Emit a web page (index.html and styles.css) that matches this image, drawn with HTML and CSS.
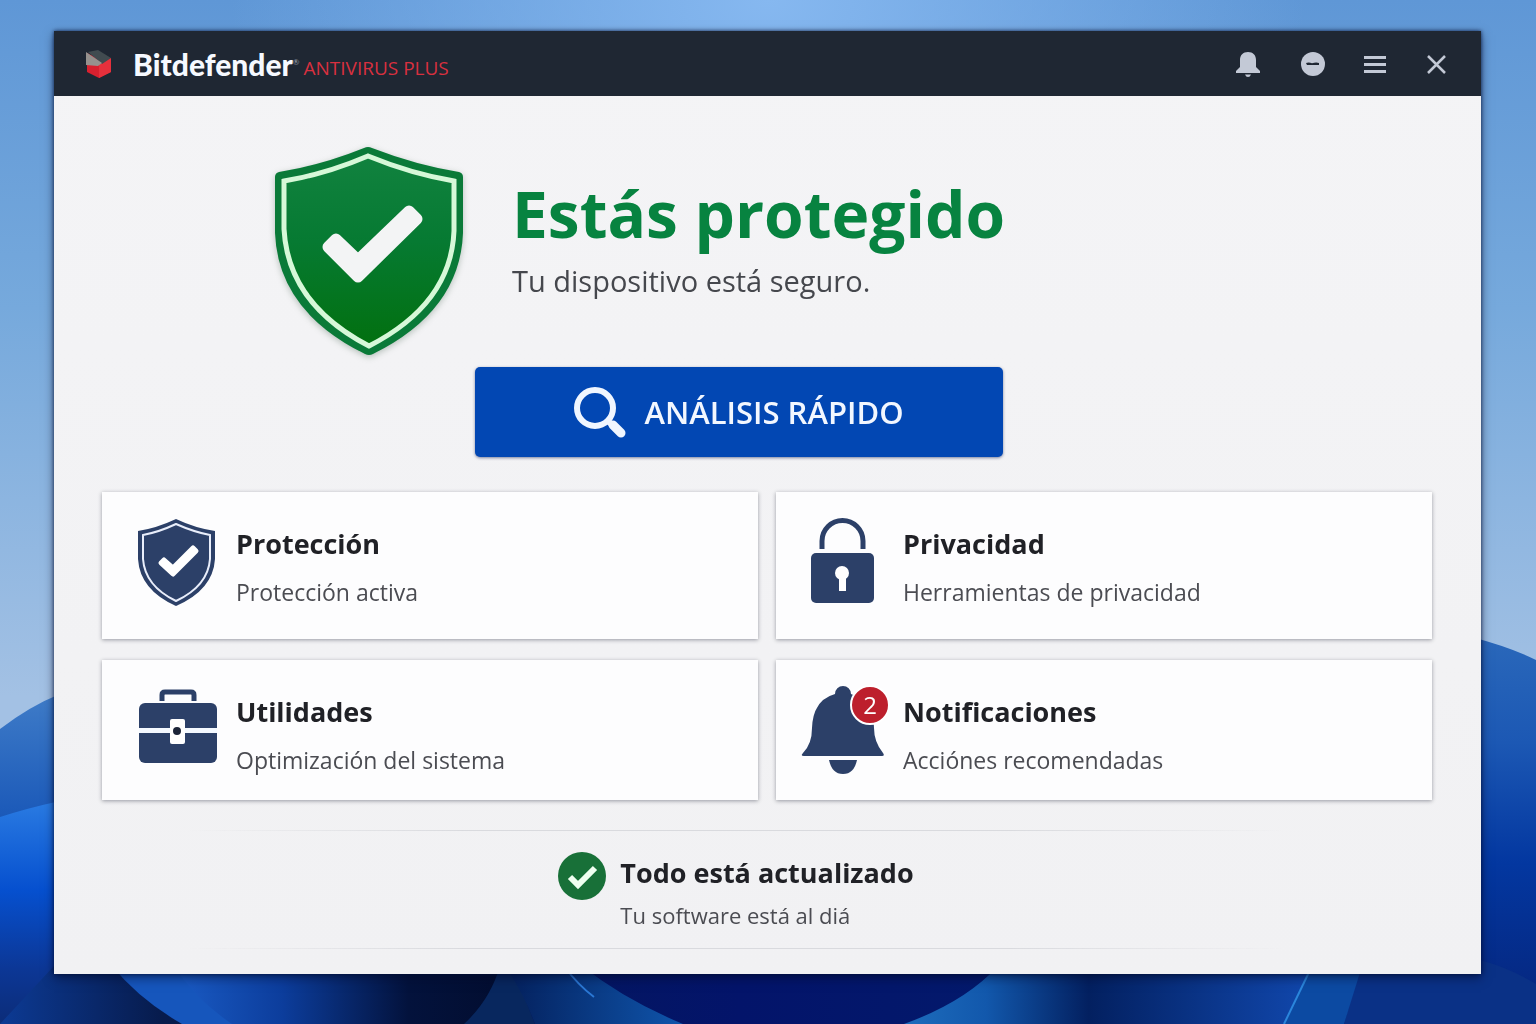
FILE: index.html
```html
<!DOCTYPE html>
<html lang="es">
<head>
<meta charset="utf-8">
<meta name="viewport" content="width=device-width, initial-scale=1">
<title>Bitdefender Antivirus Plus</title>
<link rel="stylesheet" href="styles.css">
</head>
<body>
<svg class="wallpaper" viewBox="0 0 1536 1024" preserveAspectRatio="none" aria-hidden="true">
  <defs>
    <linearGradient id="sky" x1="0" y1="0" x2="0" y2="1"><stop offset="0" stop-color="#5f97d6"/><stop offset=".3" stop-color="#76a9dc"/><stop offset=".68" stop-color="#a3c1e4"/></linearGradient>
    <radialGradient id="glow" cx=".5" cy="0" r=".35"><stop offset="0" stop-color="#86b8f0"/><stop offset="1" stop-color="#86b8f0" stop-opacity="0"/></radialGradient>
    <linearGradient id="hillBack" x1="0" y1="694" x2="0" y2="820" gradientUnits="userSpaceOnUse"><stop offset="0" stop-color="#3f7cc8"/><stop offset="1" stop-color="#1a58b8"/></linearGradient>
    <linearGradient id="hillFront" x1="0" y1="0" x2="0" y2="1"><stop offset="0" stop-color="#2a7be2"/><stop offset=".4" stop-color="#0650cf"/><stop offset=".75" stop-color="#0c3796"/><stop offset="1" stop-color="#0c2c78"/></linearGradient>
    <linearGradient id="hillRight" x1="0" y1="0" x2="0" y2="1"><stop offset="0" stop-color="#2c6abb"/><stop offset=".3" stop-color="#1c58b4"/><stop offset=".6" stop-color="#0337a0"/><stop offset="1" stop-color="#06247a"/></linearGradient>
    <linearGradient id="floor" x1="0" y1="0" x2="1" y2="0"><stop offset="0" stop-color="#0c3a94"/><stop offset=".11" stop-color="#071b4c"/><stop offset=".5" stop-color="#03146a"/><stop offset=".9" stop-color="#03206e"/><stop offset="1" stop-color="#0a3594"/></linearGradient>
    <linearGradient id="petalLeft" x1="0" y1="0" x2="1" y2="0"><stop offset="0" stop-color="#1a5bc4"/><stop offset=".3" stop-color="#0c3d9c"/><stop offset=".65" stop-color="#03123c"/><stop offset="1" stop-color="#020c2c"/></linearGradient>
    <linearGradient id="petalMid" x1="0" y1="0" x2="1" y2="0"><stop offset="0" stop-color="#04205c"/><stop offset="1" stop-color="#0f55ac"/></linearGradient>
    <linearGradient id="petalRight" x1="0" y1="0" x2="1" y2="0"><stop offset="0" stop-color="#1d6cbc"/><stop offset=".2" stop-color="#1258ac"/><stop offset=".45" stop-color="#032060"/><stop offset="1" stop-color="#1148ae"/></linearGradient>
  </defs>
  <rect width="1536" height="1024" fill="url(#sky)"/>
  <rect width="1536" height="1024" fill="url(#glow)"/>
  <path d="M0 729Q30 706 60 694H400V1024H0Z" fill="url(#hillBack)"/>
  <path d="M0 817Q28 808 60 801H400V1024H0Z" fill="url(#hillFront)"/>
  <path d="M1400 622Q1490 637 1536 660V1024H1400Z" fill="url(#hillRight)"/>
  <path d="M54 966H1480V1024H0Z" fill="url(#floor)"/>
  <path d="M1360 966H1480V960Q1510 968 1536 984V1024H1344Z" fill="#0a3186"/>
  <path d="M112 966Q140 1000 182 1024H236L176 966Z" fill="#1656bc"/>
  <path d="M174 966Q196 1000 232 1024H535L500 966Z" fill="url(#petalLeft)"/>
  <path d="M500 966Q490 1000 464 1024H535L512 966Z" fill="#08275e"/>
  <path d="M505 966Q525 996 535 1024H683Q625 1000 582 966Z" fill="url(#petalMid)"/>
  <path d="M564 966Q578 985 594 997" fill="none" stroke="#2b78d4" stroke-width="2"/>
  <path d="M998 966Q965 1002 904 1024H1285L1314 966Z" fill="url(#petalRight)"/>
  <path d="M1312 966L1284 1024H1344L1362 966Z" fill="#0c4aa2"/>
  <path d="M1312 966L1284 1024" stroke="#2b86dc" stroke-width="2"/>
</svg>

<main class="window">
  <header class="titlebar">
    <svg class="logo" viewBox="0 0 26 28" aria-hidden="true">
      <path d="M1 3L13 9 25 8V22L13 28 1 22Z" fill="#d8202f"/>
      <path d="M13 14L25 8V22L13 28Z" fill="#e5303c"/>
      <path d="M2 2L12 0 25 8 16 14Z" fill="#414b50"/>
      <path d="M0 2L16 13 12 16 0 15Z" fill="#96918e"/>
    </svg>
    <h1 class="brand">Bitdefender<sup class="reg">®</sup></h1>
    <span class="edition">ANTIVIRUS PLUS</span>
    <nav class="tools" aria-label="Ventana">
      <button class="tool" type="button" aria-label="Avisos"><svg viewBox="0 0 24 26"><path d="M0 22v-2l4-4V9c0-5 3-8 8-8s8 3 8 8v7l4 4v2Z"/><path d="M9 23.500h6q-1 2.500-3 2.500t-3-2.500Z"/></svg></button>
      <button class="tool" type="button" aria-label="Cuenta"><svg viewBox="0 0 24 26"><circle cx="12" cy="13" r="12"/><path class="cut" d="M5 12q3-1 6 .3 4-1.300 7-.3v2H6Z"/></svg></button>
      <button class="tool" type="button" aria-label="Menú"><svg viewBox="0 0 24 26"><path d="M1 5h22v3H1ZM1 12h22v3H1ZM1 19h22v3H1Z"/></svg></button>
      <button class="tool" type="button" aria-label="Cerrar"><svg viewBox="0 0 24 26"><path class="line" d="M3 5l17 17M20 5L3 22"/></svg></button>
    </nav>
  </header>

  <section class="hero">
    <svg class="hero-shield" viewBox="0 0 190 210" aria-hidden="true">
      <defs><linearGradient id="green" x1="0" y1="0" x2="0" y2="1"><stop offset="0" stop-color="#11823f"/><stop offset=".45" stop-color="#067a32"/><stop offset="1" stop-color="#02700f"/></linearGradient></defs>
      <path d="M90 1Q94 -1 98 1Q142 18 185 25Q189 26 189 30V86Q186 164 99 207Q95 209 91 207Q4 164 1 86V30Q1 26 5 25Q48 18 90 1Z" fill="#0a7a38"/>
      <path d="M94 9Q138 27 180 34V84Q177 157 95 199Q14 157 10 82V34Q52 27 94 9Z" fill="url(#green)" stroke="#d6f8d8" stroke-width="5"/>
      <path d="M54 100L62 92 84 113 135 64 143 72 84 130Z" fill="#f3f4f5" stroke="#f3f4f5" stroke-width="11" stroke-linejoin="round"/>
    </svg>
    <div class="hero-text">
      <h2 class="hero-title">Estás protegido</h2>
      <p class="hero-sub">Tu dispositivo está seguro.</p>
    </div>
  </section>

  <button class="scan" type="button">
    <svg class="scan-icon" viewBox="0 0 52 52" aria-hidden="true"><circle cx="21" cy="22" r="18" fill="none" stroke="#f0f6ff" stroke-width="6"/><path d="M34 35L38 39" stroke="#f0f6ff" stroke-width="6"/><path d="M39 39L47 47" stroke="#f0f6ff" stroke-width="9" stroke-linecap="round"/></svg>
    <span>ANÁLISIS RÁPIDO</span>
  </button>

  <section class="cards">
    <a class="card" href="#proteccion">
      <svg class="card-icon" viewBox="0 0 84 92" aria-hidden="true"><path d="M41 3Q60 12 80 15V43Q78 74 41 90Q5 74 3 43V15Q22 12 41 3Z" fill="#2c4068"/><path d="M41 8Q59 16 75 19V43Q73 70 41 85Q10 70 8 43V19Q24 16 41 8Z" fill="none" stroke="#e9eefb" stroke-width="2"/><path d="M26 47L29 44 38 52 58 32 61 35 38 58Z" fill="#fff" stroke="#fff" stroke-width="5" stroke-linejoin="round"/></svg>
      <span class="card-text"><strong class="card-title">Protección</strong><span class="card-sub">Protección activa</span></span>
    </a>
    <a class="card" href="#privacidad">
      <svg class="card-icon" viewBox="0 0 84 92" aria-hidden="true"><path d="M22 33V25a20 20 0 0 1 41 0V33" fill="none" stroke="#2c4068" stroke-width="5"/><rect x="11" y="37" width="63" height="50" rx="5" fill="#2c4068"/><circle cx="42" cy="57" r="7" fill="#fff"/><path d="M39 59h7v16h-7Z" fill="#fff"/></svg>
      <span class="card-text"><strong class="card-title">Privacidad</strong><span class="card-sub">Herramientas de privacidad</span></span>
    </a>
    <a class="card" href="#utilidades">
      <svg class="card-icon" viewBox="0 0 84 92" aria-hidden="true"><path d="M27 17V11q0-3 3-3h26q3 0 3 3V17" fill="none" stroke="#2c4068" stroke-width="5"/><rect x="4" y="19" width="78" height="60" rx="6" fill="#2c4068"/><path d="M4 44h78v5H4Z" fill="#f4f9ff"/><rect x="35" y="35" width="15" height="25" rx="2" fill="#fff"/><circle cx="42" cy="47" r="4" fill="#1c2438"/></svg>
      <span class="card-text"><strong class="card-title">Utilidades</strong><span class="card-sub">Optimización del sistema</span></span>
    </a>
    <a class="card" href="#notificaciones">
      <span class="icon-wrap">
        <svg class="card-icon" viewBox="0 0 84 92" aria-hidden="true"><path d="M35 10a8 8 0 0 1 16 0Q74 18 74 44Q74 58 83 69Q85 72 82 72H4Q0 72 3 69Q12 60 12 44Q13 16 35 10Z" fill="#2c4068"/><path d="M29 76H57Q54 90 43 90T29 76Z" fill="#2c4068"/></svg>
        <span class="badge">2</span>
      </span>
      <span class="card-text"><strong class="card-title">Notificaciones</strong><span class="card-sub">Acciónes recomendadas</span></span>
    </a>
  </section>

  <footer class="status">
    <svg class="status-icon" viewBox="0 0 48 48" aria-hidden="true"><circle cx="24" cy="24" r="24" fill="#187038"/><path d="M12 25L20 33 37 16" fill="none" stroke="#effff0" stroke-width="6"/></svg>
    <div>
      <p class="status-title">Todo está actualizado</p>
      <p class="status-sub">Tu software está al diá</p>
    </div>
  </footer>
</main>
</body>
</html>
```
FILE: styles.css
```css
* { box-sizing: border-box; }

body {
  margin: 0;
  padding: 31px 55px 50px 54px;
  min-height: 100vh;
  display: flex;
  background: #0c3a94;
  font-family: "Open Sans", "Noto Sans", sans-serif;
  color: #202126;
}

h1, h2, p { margin: 0; }

button { font: inherit; border: 0; padding: 0; cursor: pointer; }

.wallpaper {
  position: fixed;
  inset: 0;
  width: 100%;
  height: 100%;
  z-index: -1;
}

.window {
  flex: 1;
  display: flex;
  flex-direction: column;
  background: linear-gradient(#f4f4f6, #f1f1f3);
  box-shadow: 0 0 4px rgba(0, 12, 50, .8), 0 4px 10px rgba(0, 10, 40, .5);
}

.titlebar {
  display: flex;
  align-items: center;
  height: 65px;
  padding: 0 32px;
  background: #1f2733;
}

.logo { width: 26px; height: 28px; margin-right: 21px; }

.brand {
  font-family: Lato, sans-serif;
  font-size: 30px;
  line-height: 36px;
  font-weight: 900;
  color: #f6f9ff;
}

.reg { font-size: 8px; font-weight: 400; color: #9aa2ae; vertical-align: 11px; line-height: 1; }

.edition { margin: 9px 0 0 4px; font-size: 19px; line-height: 28px; color: #d8303f; }

.tools { display: flex; gap: 38px; margin-left: auto; }

.tool { display: block; width: 24px; height: 26px; background: none; }

.tool svg { display: block; width: 24px; height: 26px; fill: #c3c9d6; }

.tool:first-child { margin-right: 3px; }

.tool .cut { fill: #1f2733; }

.tool .line { fill: none; stroke: #c3c9d6; stroke-width: 2.5; }

.hero { display: flex; gap: 48px; padding: 51px 48px 0 220px; }

.hero-shield { flex: none; width: 190px; height: 210px; filter: drop-shadow(0 2px 3px rgba(0, 40, 10, .25)); }

.hero-text { padding-top: 23px; }

.hero-title { font-size: 64px; line-height: 88px; font-weight: 700; color: #078340; }

.hero-sub { font-size: 29px; line-height: 46px; color: #45474d; }

.scan {
  display: flex;
  align-items: center;
  justify-content: center;
  gap: 18px;
  width: 528px;
  height: 90px;
  margin: 10px 0 0 421px;
  border-radius: 5px;
  background: #0247b3;
  color: #f2f7ff;
  font-size: 31px;
  font-weight: 600;
  box-shadow: 0 1px 3px rgba(0, 20, 80, .5);
}

.scan-icon { width: 52px; height: 52px; }

.cards {
  display: grid;
  grid-template-columns: 1fr 1fr;
  grid-template-rows: 147px 140px;
  gap: 21px 18px;
  padding: 35px 49px 0 48px;
}

.card {
  display: flex;
  gap: 17px;
  padding: 24px 33px 0;
  background: #fdfdfe;
  color: inherit;
  text-decoration: none;
  box-shadow: 0 1px 4px rgba(40, 45, 60, .45);
}

.card:nth-child(even) { gap: 19px; padding-left: 24px; }

.card-icon { flex: none; display: block; width: 84px; height: 92px; }

.icon-wrap { position: relative; flex: none; height: 92px; }

.badge {
  position: absolute;
  top: 1px;
  right: -6px;
  width: 40px;
  height: 40px;
  border: 2px solid #fff;
  border-radius: 50%;
  background: #bd1f2c;
  color: #fff;
  font-size: 24px;
  line-height: 36px;
  text-align: center;
}

.card-text { display: flex; flex-direction: column; }

.card-title { font-size: 27px; line-height: 55px; font-weight: 700; }

.card-sub { font-size: 23px; line-height: 42px; color: #4b4c52; }

.status {
  display: flex;
  justify-content: center;
  gap: 14px;
  height: 119px;
  margin: 30px 63px 0 0;
  padding-top: 21px;
  border: solid transparent;
  border-width: 1px 0;
  border-image: linear-gradient(90deg, transparent 10%, #d9dade 30%, #d9dade 70%, transparent 90%) 1;
}

.status-icon { width: 48px; height: 48px; }

.status-title { font-size: 27px; line-height: 42px; font-weight: 700; }

.status-sub { font-size: 22px; line-height: 42px; color: #4b4c52; }
```
